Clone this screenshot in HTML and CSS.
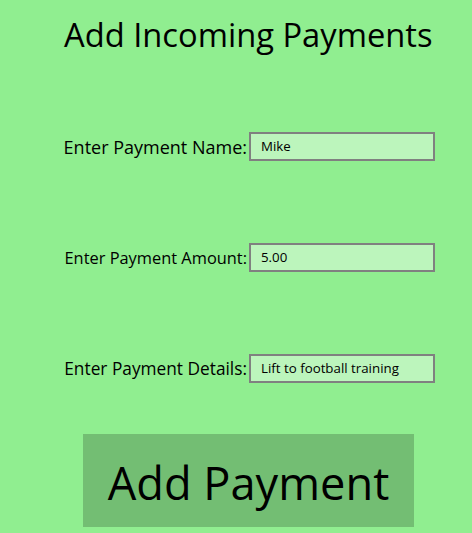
FILE: index.html
```html
<!DOCTYPE html>
<html>
<head>
<meta charset="utf-8">
<link rel="stylesheet" href="styles.css">
</head>
<body>
<div class="page">
  <h1 class="title">Add Incoming Payments</h1>
  <div class="form">
    <div class="row">
      <label class="label label-name">Enter Payment Name:</label>
      <div class="field">Mike</div>
    </div>
    <div class="row">
      <label class="label label-amount">Enter Payment Amount:</label>
      <div class="field">5.00</div>
    </div>
    <div class="row">
      <label class="label label-details">Enter Payment Details:</label>
      <div class="field">Lift to football training</div>
    </div>
  </div>
  <div class="button">Add Payment</div>
</div>
</body>
</html>
```
FILE: styles.css
```css
html, body {
  margin: 0;
  padding: 0;
}
body {
  background: #90ee90;
  font-family: "Open Sans", "Noto Sans", sans-serif;
  color: #000;
  width: 472px;
  height: 533px;
  overflow: hidden;
}
.page {
  display: flex;
  flex-direction: column;
}
.title {
  margin: 14px 0 0 64px;
  font-size: 32.7px;
  font-weight: 400;
  line-height: 42px;
  white-space: nowrap;
}
.form {
  display: flex;
  flex-direction: column;
  gap: 82px;
  margin-top: 76px;
}
.row {
  display: grid;
  grid-template-columns: 210px 186px;
  column-gap: 2px;
  padding-left: 37px;
  align-items: center;
}
.label {
  text-align: right;
  white-space: nowrap;
}
.label-name {
  font-size: 18px;
}
.label-amount {
  font-size: 16.4px;
}
.label-details {
  font-size: 17.3px;
}
.field {
  box-sizing: border-box;
  height: 29px;
  border: 2px solid #808080;
  background: #bcf5bc;
  padding: 0 10px;
  font-size: 13.3px;
  line-height: 25px;
  white-space: nowrap;
  overflow: hidden;
}
.button {
  margin: 51px 0 0 83px;
  width: 331px;
  height: 93px;
  background: #73be73;
  display: flex;
  align-items: center;
  justify-content: center;
  font-size: 45.2px;
  padding-top: 4px;
  box-sizing: border-box;
}
```
